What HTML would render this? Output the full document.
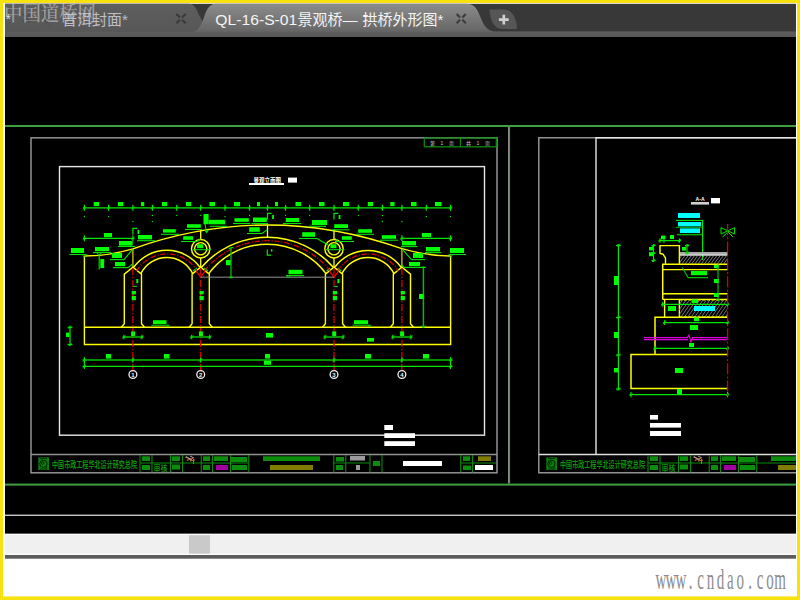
<!DOCTYPE html>
<html lang="zh-CN"><head><meta charset="utf-8"><title>QL-16-S-01景观桥— 拱桥外形图</title>
<style>
html,body{margin:0;padding:0;background:#f7e20f;width:800px;height:600px;overflow:hidden}
svg{display:block;position:absolute;left:0;top:0}
text{font-family:"Liberation Sans","Noto Sans CJK SC",sans-serif}
.wm{font-family:"Liberation Serif","Noto Serif CJK SC",serif}
</style></head><body>
<svg width="800" height="600" viewBox="0 0 800 600">
<defs>
<linearGradient id="tabA" x1="0" y1="0" x2="0" y2="1"><stop offset="0" stop-color="#8c8c8c"/><stop offset="0.75" stop-color="#6a6a6a"/><stop offset="1" stop-color="#565656"/></linearGradient>
<linearGradient id="tabI" x1="0" y1="0" x2="0" y2="1"><stop offset="0" stop-color="#5e5e5e"/><stop offset="1" stop-color="#575757"/></linearGradient>
</defs>
<rect x="0" y="0" width="800" height="600" fill="#f7e20f"/>
<rect x="3" y="3" width="794" height="593.4" fill="#ffffff"/>
<!-- tab bar -->
<rect x="5" y="3.8" width="791" height="33.2" fill="#383838"/>
<path d="M5 3.8 H189 C195 3.8 197 11 200 17 C202 20 203.2 22 202.6 24 C201 29 197 32 191 32 H5 Z" fill="url(#tabI)"/>
<path d="M37 4 C44 5 43 22 49 26" fill="none" stroke="#4c4c4c" stroke-width="1"/>
<path d="M5 37 V32 H191 C198 32 200.5 26 203 20 C206 12 208 3.8 216 3.8 H466 C475 3.8 477.5 10 480 16 C483 23.5 486 31.5 496 31.5 H796 V37 Z" fill="url(#tabA)"/>
<rect x="5" y="32" width="791" height="5" fill="#5a5a5a" opacity="0.55"/>
<path d="M489.5 9.5 H504 C512 9.5 516.5 18 517 29 H502 C494 29 490 20 489.5 9.5 Z" fill="#565656"/>
<path d="M503.8 14.8 V24.6 M498.9 19.7 H508.7" stroke="#cecece" stroke-width="2.7" fill="none"/>
<path d="M182.1 19.7 L185.6 23.2 M182.1 17.5 L185.6 14.0 M179.9 19.7 L176.4 23.2 M179.9 17.5 L176.4 14.0" stroke="#3a3a3a" stroke-width="2.1" fill="none" />
<path d="M462.3 19.8 L465.8 23.3 M462.3 17.6 L465.8 14.1 M460.1 19.8 L456.6 23.3 M460.1 17.6 L456.6 14.1" stroke="#3c3c3c" stroke-width="2.1" fill="none" />
<path d="M23 14 L30 22 M30 14 L23 22" stroke="#444" stroke-width="1.8" fill="none" opacity="0.7"/>
<text x="5.5" y="24" font-size="14" fill="#d8d8d8">*</text>
<text x="62" y="25.4" font-size="15" fill="#bebec8">普洱封面*</text>
<text y="24.8" font-size="15" fill="#f4f4f4"><tspan x="215.3" font-size="14.7" textLength="82" lengthAdjust="spacingAndGlyphs">QL-16-S-01</tspan><tspan x="297.6">景观桥—</tspan><tspan> </tspan><tspan x="362.6">拱桥外形图*</tspan></text>
<text class="wm" x="4" y="21" font-size="20" font-weight="500" fill="#cccccc" opacity="0.62" textLength="92" lengthAdjust="spacingAndGlyphs">中国道桥网</text>
<!-- canvas -->
<rect x="5" y="37" width="791" height="496.8" fill="#000000"/>
<rect x="5" y="125" width="791" height="2" fill="#3f9f3f"/>
<rect x="5" y="483.6" width="791" height="2" fill="#3f9f3f"/>
<rect x="508" y="127" width="1" height="356.6" fill="#8a8a8a"/>
<rect x="509" y="127" width="1.1" height="356.6" fill="#3f9f3f"/>
<rect x="5" y="514.6" width="791" height="1.3" fill="#d8d8d8"/>
<g id="sheet1">
<rect x="31" y="137.8" width="466" height="335" fill="none" stroke="#929292" stroke-width="1.5"/>
<line x1="31.00" y1="454.60" x2="497.00" y2="454.60" stroke="#929292" stroke-width="1.5" />
<rect x="59.5" y="166.6" width="425" height="268.6" fill="none" stroke="#e6e6e6" stroke-width="1.4"/>
<rect x="424.3" y="138" width="72" height="8.8" fill="none" stroke="#0a8a0a" stroke-width="1.3"/>
<line x1="460.40" y1="138.00" x2="460.40" y2="146.80" stroke="#0a8a0a" stroke-width="1.2" />
<text x="430" y="144.6" font-size="5" fill="#cfcfcf" textLength="24" lengthAdjust="spacing">第 1 页</text>
<text x="466" y="144.6" font-size="5" fill="#cfcfcf" textLength="24" lengthAdjust="spacing">共 1 页</text>
<text x="253.5" y="182.6" font-size="6.6" font-weight="700" fill="#ffffff" textLength="27.5" lengthAdjust="spacingAndGlyphs">景观立面图</text>
<rect x="249.00" y="183.00" width="35.00" height="2.00" fill="#ffffff" />
<rect x="288.00" y="177.60" width="9.00" height="5.00" fill="#ffffff" />
<rect x="384.30" y="425.00" width="8.70" height="5.00" fill="#ffffff" />
<rect x="384.30" y="433.20" width="30.70" height="4.80" fill="#ffffff" />
<rect x="384.30" y="441.20" width="30.70" height="4.80" fill="#ffffff" />
<rect x="38.30" y="457.40" width="10.70" height="12.60" fill="#0a800a" />
<circle cx="43.40" cy="463.80" r="3.60" stroke="#001800" stroke-width="0.9" fill="none"/>
<circle cx="42.60" cy="463.00" r="1.30" stroke="#001800" stroke-width="0.9" fill="none"/>
<path d="M40 458.6 h7 M40 469 h7 M45 466 l2 2.4" stroke="#001800" stroke-width="0.8" fill="none" />
<text x="52.0" y="467.8" font-size="8.8" font-weight="700" fill="#0d900d" textLength="85" lengthAdjust="spacingAndGlyphs" transform="translate(0,0)">中国市政工程华北设计研究总院</text>
<line x1="140.00" y1="455.00" x2="140.00" y2="472.50" stroke="#0a8a0a" stroke-width="1.1" />
<line x1="152.00" y1="455.00" x2="152.00" y2="472.50" stroke="#0a8a0a" stroke-width="1.1" />
<line x1="170.50" y1="455.00" x2="170.50" y2="472.50" stroke="#0a8a0a" stroke-width="1.1" />
<line x1="182.50" y1="455.00" x2="182.50" y2="472.50" stroke="#0a8a0a" stroke-width="1.1" />
<line x1="201.25" y1="455.00" x2="201.25" y2="472.50" stroke="#0a8a0a" stroke-width="1.1" />
<line x1="212.50" y1="455.00" x2="212.50" y2="472.50" stroke="#0a8a0a" stroke-width="1.1" />
<line x1="230.50" y1="455.00" x2="230.50" y2="472.50" stroke="#0a8a0a" stroke-width="1.1" />
<line x1="248.75" y1="455.00" x2="248.75" y2="472.50" stroke="#0a8a0a" stroke-width="1.1" />
<line x1="333.75" y1="455.00" x2="333.75" y2="472.50" stroke="#0a8a0a" stroke-width="1.1" />
<line x1="345.75" y1="455.00" x2="345.75" y2="472.50" stroke="#0a8a0a" stroke-width="1.1" />
<line x1="370.00" y1="455.00" x2="370.00" y2="472.50" stroke="#0a8a0a" stroke-width="1.1" />
<line x1="382.00" y1="455.00" x2="382.00" y2="472.50" stroke="#0a8a0a" stroke-width="1.1" />
<line x1="460.75" y1="455.00" x2="460.75" y2="472.50" stroke="#0a8a0a" stroke-width="1.1" />
<line x1="472.50" y1="455.00" x2="472.50" y2="472.50" stroke="#0a8a0a" stroke-width="1.1" />
<line x1="140.00" y1="463.00" x2="248.75" y2="463.00" stroke="#0a8a0a" stroke-width="1.1" />
<line x1="333.75" y1="463.00" x2="370.00" y2="463.00" stroke="#0a8a0a" stroke-width="1.1" />
<line x1="460.75" y1="463.00" x2="496.00" y2="463.00" stroke="#0a8a0a" stroke-width="1.1" />
<rect x="142.00" y="456.30" width="8.00" height="4.70" fill="#0c8c0c" />
<rect x="142.00" y="465.00" width="8.00" height="5.00" fill="#0c8c0c" />
<rect x="172.00" y="456.30" width="8.00" height="4.70" fill="#0c8c0c" />
<rect x="172.00" y="464.50" width="8.00" height="5.00" fill="#0c8c0c" />
<rect x="203.00" y="456.30" width="7.00" height="4.70" fill="#0c8c0c" />
<rect x="203.00" y="465.00" width="7.00" height="5.00" fill="#0c8c0c" />
<rect x="214.00" y="456.30" width="14.00" height="4.70" fill="#0c8c0c" />
<rect x="216.00" y="465.00" width="12.00" height="5.00" fill="#a000a0" />
<rect x="231.00" y="457.00" width="16.00" height="5.00" fill="#0c8c0c" />
<rect x="232.00" y="465.00" width="15.00" height="5.00" fill="#0c8c0c" />
<rect x="263.00" y="456.30" width="57.00" height="4.70" fill="#0c8c0c" />
<rect x="270.00" y="465.00" width="43.00" height="5.00" fill="#807c00" />
<rect x="336.00" y="457.00" width="8.00" height="4.50" fill="#0c8c0c" />
<rect x="336.00" y="465.00" width="7.00" height="5.00" fill="#0c8c0c" />
<rect x="350.00" y="456.00" width="15.00" height="4.50" fill="#9a9a9a" />
<rect x="356.00" y="465.00" width="4.00" height="5.00" fill="#9a9a9a" />
<rect x="373.00" y="461.00" width="7.00" height="5.00" fill="#0c8c0c" />
<rect x="403.00" y="461.00" width="39.00" height="5.00" fill="#ffffff" />
<rect x="463.00" y="456.30" width="7.00" height="4.70" fill="#0c8c0c" />
<rect x="463.00" y="465.50" width="8.00" height="4.50" fill="#0c8c0c" />
<rect x="478.00" y="456.30" width="13.00" height="4.70" fill="#807c00" />
<rect x="475.00" y="465.00" width="18.00" height="5.00" fill="#ffffff" />
<text x="153.5" y="471" font-size="7.6" font-weight="700" fill="#0d900d" textLength="14" lengthAdjust="spacingAndGlyphs">审核</text>
<path d="M185 457 l4 1.5 l-2 2 l6 -2.5 l-3 3 l5 -1 M193.5 459 l0 5" stroke="#c06a30" stroke-width="1" fill="none" />
<path d="M186 456.5 l5 3 M190 456 l4 2" stroke="#cfcfcf" stroke-width="0.8" fill="none" />
<path d="M84.4 256 Q108.6 256 132.9 248.8 Q200.2 225 267.5 225 Q334.7 225 401.9 248.7 Q426.2 256 450.6 256" stroke="#ffff00" stroke-width="1.4" fill="none" />
<path d="M84.4 256 V344.5 H450.6 V256" stroke="#ffff00" stroke-width="1.4" fill="none" />
<line x1="84.40" y1="327.30" x2="450.60" y2="327.30" stroke="#ffff00" stroke-width="1.4" />
<line x1="132.90" y1="248.80" x2="132.90" y2="267.20" stroke="#d8c800" stroke-width="1.3" />
<line x1="401.90" y1="248.60" x2="401.90" y2="267.20" stroke="#d8c800" stroke-width="1.3" />
<line x1="267.50" y1="225.00" x2="267.50" y2="237.00" stroke="#ffff00" stroke-width="1.3" />
<line x1="200.70" y1="230.20" x2="200.70" y2="239.40" stroke="#ffff00" stroke-width="1.3" />
<line x1="200.70" y1="258.00" x2="200.70" y2="267.00" stroke="#ffff00" stroke-width="1.3" />
<circle cx="200.70" cy="248.75" r="9.20" stroke="#ffff00" stroke-width="1.4" fill="none"/>
<circle cx="200.70" cy="248.75" r="6.10" stroke="#ffff00" stroke-width="1.4" fill="none"/>
<rect x="197.10" y="244.20" width="6.00" height="4.00" fill="#00ff00" />
<line x1="192.70" y1="249.70" x2="211.20" y2="249.70" stroke="#00e600" stroke-width="1" />
<line x1="334.00" y1="230.20" x2="334.00" y2="239.40" stroke="#ffff00" stroke-width="1.3" />
<line x1="334.00" y1="258.00" x2="334.00" y2="267.00" stroke="#ffff00" stroke-width="1.3" />
<circle cx="334.00" cy="248.75" r="9.20" stroke="#ffff00" stroke-width="1.4" fill="none"/>
<circle cx="334.00" cy="248.75" r="6.10" stroke="#ffff00" stroke-width="1.4" fill="none"/>
<rect x="330.40" y="244.20" width="6.00" height="4.00" fill="#00ff00" />
<line x1="326.00" y1="249.70" x2="344.50" y2="249.70" stroke="#00e600" stroke-width="1" />
<path d="M121.30 327.3 L124.30 323.7 V274.2 L132.90 267.2 L141.50 274.2 V323.7 L144.50 327.3" stroke="#ffff00" stroke-width="1.4" fill="none" />
<path d="M189.10 327.3 L192.10 323.7 V274.2 L200.70 267.2 L209.30 274.2 V323.7 L212.30 327.3" stroke="#ffff00" stroke-width="1.4" fill="none" />
<path d="M322.40 327.3 L325.40 323.7 V274.2 L334.00 267.2 L342.60 274.2 V323.7 L345.60 327.3" stroke="#ffff00" stroke-width="1.4" fill="none" />
<path d="M390.30 327.3 L393.30 323.7 V274.2 L401.90 267.2 L410.50 274.2 V323.7 L413.50 327.3" stroke="#ffff00" stroke-width="1.4" fill="none" />
<path d="M196.29999999999998 271.4 L200.7 277 L205.1 271.4" stroke="#d80000" stroke-width="1.4" fill="none" />
<path d="M193.29999999999998 271 l3.6 -3 M204.29999999999998 268 l3.6 3" stroke="#00e600" stroke-width="1.3" fill="none" />
<path d="M329.6 271.4 L334.0 277 L338.4 271.4" stroke="#d80000" stroke-width="1.4" fill="none" />
<path d="M326.6 271 l3.6 -3 M337.6 268 l3.6 3" stroke="#00e600" stroke-width="1.3" fill="none" />
<path d="M133.70 267.20 A40.86 40.86 0 0 1 199.90 267.20" stroke="#ffff00" stroke-width="1.5" fill="none" />
<path d="M140.90 273.60 A28.88 28.88 0 0 1 192.70 273.60" stroke="#ffff00" stroke-width="1.5" fill="none" />
<path d="M136.50 271.00 A35.39 35.39 0 0 1 197.10 271.00" stroke="#d80000" stroke-width="1.25" fill="none" stroke-dasharray="5.5 1.6 1.2 1.6"/>
<path d="M334.80 267.20 A41.25 41.25 0 0 1 401.10 267.20" stroke="#ffff00" stroke-width="1.5" fill="none" />
<path d="M342.00 273.60 A28.96 28.96 0 0 1 393.90 273.60" stroke="#ffff00" stroke-width="1.5" fill="none" />
<path d="M337.60 271.00 A35.59 35.59 0 0 1 398.30 271.00" stroke="#d80000" stroke-width="1.25" fill="none" stroke-dasharray="5.5 1.6 1.2 1.6"/>
<path d="M201.50 267.20 A87.27 87.27 0 0 1 333.20 267.20" stroke="#ffff00" stroke-width="1.5" fill="none" />
<path d="M208.70 273.60 A73.20 73.20 0 0 1 326.00 273.60" stroke="#ffff00" stroke-width="1.5" fill="none" />
<path d="M204.30 271.00 A80.75 80.75 0 0 1 330.40 271.00" stroke="#d80000" stroke-width="1.25" fill="none" stroke-dasharray="5.5 1.6 1.2 1.6"/>
<line x1="132.90" y1="268.00" x2="132.90" y2="370.50" stroke="#d80000" stroke-width="1.3" stroke-dasharray="7 1.8 1.4 1.8"/>
<line x1="200.70" y1="268.00" x2="200.70" y2="370.50" stroke="#d80000" stroke-width="1.3" stroke-dasharray="7 1.8 1.4 1.8"/>
<line x1="334.00" y1="268.00" x2="334.00" y2="370.50" stroke="#d80000" stroke-width="1.3" stroke-dasharray="7 1.8 1.4 1.8"/>
<line x1="401.90" y1="268.00" x2="401.90" y2="370.50" stroke="#d80000" stroke-width="1.3" stroke-dasharray="7 1.8 1.4 1.8"/>
<line x1="200.70" y1="277.20" x2="334.00" y2="277.20" stroke="#909090" stroke-width="1" />
<rect x="288.50" y="269.80" width="14.00" height="4.40" fill="#00ff00" />
<line x1="286.00" y1="275.60" x2="304.00" y2="275.60" stroke="#00e600" stroke-width="1.1" />
<path d="M286.5 275.6 l2 2.4 l2 -2.4" stroke="#00e600" stroke-width="0.9" fill="none" />
<line x1="82.90" y1="207.80" x2="452.10" y2="207.80" stroke="#00e600" stroke-width="1.3" />
<line x1="84.40" y1="204.80" x2="84.40" y2="210.80" stroke="#00e600" stroke-width="1.2" />
<line x1="82.90" y1="209.30" x2="85.90" y2="206.30" stroke="#00e600" stroke-width="0.8" />
<line x1="108.60" y1="204.80" x2="108.60" y2="210.80" stroke="#00e600" stroke-width="1.2" />
<line x1="107.10" y1="209.30" x2="110.10" y2="206.30" stroke="#00e600" stroke-width="0.8" />
<line x1="132.90" y1="204.80" x2="132.90" y2="210.80" stroke="#00e600" stroke-width="1.2" />
<line x1="131.40" y1="209.30" x2="134.40" y2="206.30" stroke="#00e600" stroke-width="0.8" />
<line x1="152.40" y1="204.80" x2="152.40" y2="210.80" stroke="#00e600" stroke-width="1.2" />
<line x1="150.90" y1="209.30" x2="153.90" y2="206.30" stroke="#00e600" stroke-width="0.8" />
<line x1="176.70" y1="204.80" x2="176.70" y2="210.80" stroke="#00e600" stroke-width="1.2" />
<line x1="175.20" y1="209.30" x2="178.20" y2="206.30" stroke="#00e600" stroke-width="0.8" />
<line x1="200.70" y1="204.80" x2="200.70" y2="210.80" stroke="#00e600" stroke-width="1.2" />
<line x1="199.20" y1="209.30" x2="202.20" y2="206.30" stroke="#00e600" stroke-width="0.8" />
<line x1="225.00" y1="204.80" x2="225.00" y2="210.80" stroke="#00e600" stroke-width="1.2" />
<line x1="223.50" y1="209.30" x2="226.50" y2="206.30" stroke="#00e600" stroke-width="0.8" />
<line x1="249.50" y1="204.80" x2="249.50" y2="210.80" stroke="#00e600" stroke-width="1.2" />
<line x1="248.00" y1="209.30" x2="251.00" y2="206.30" stroke="#00e600" stroke-width="0.8" />
<line x1="267.50" y1="204.80" x2="267.50" y2="210.80" stroke="#00e600" stroke-width="1.2" />
<line x1="266.00" y1="209.30" x2="269.00" y2="206.30" stroke="#00e600" stroke-width="0.8" />
<line x1="285.50" y1="204.80" x2="285.50" y2="210.80" stroke="#00e600" stroke-width="1.2" />
<line x1="284.00" y1="209.30" x2="287.00" y2="206.30" stroke="#00e600" stroke-width="0.8" />
<line x1="309.60" y1="204.80" x2="309.60" y2="210.80" stroke="#00e600" stroke-width="1.2" />
<line x1="308.10" y1="209.30" x2="311.10" y2="206.30" stroke="#00e600" stroke-width="0.8" />
<line x1="334.00" y1="204.80" x2="334.00" y2="210.80" stroke="#00e600" stroke-width="1.2" />
<line x1="332.50" y1="209.30" x2="335.50" y2="206.30" stroke="#00e600" stroke-width="0.8" />
<line x1="358.30" y1="204.80" x2="358.30" y2="210.80" stroke="#00e600" stroke-width="1.2" />
<line x1="356.80" y1="209.30" x2="359.80" y2="206.30" stroke="#00e600" stroke-width="0.8" />
<line x1="382.40" y1="204.80" x2="382.40" y2="210.80" stroke="#00e600" stroke-width="1.2" />
<line x1="380.90" y1="209.30" x2="383.90" y2="206.30" stroke="#00e600" stroke-width="0.8" />
<line x1="401.90" y1="204.80" x2="401.90" y2="210.80" stroke="#00e600" stroke-width="1.2" />
<line x1="400.40" y1="209.30" x2="403.40" y2="206.30" stroke="#00e600" stroke-width="0.8" />
<line x1="426.30" y1="204.80" x2="426.30" y2="210.80" stroke="#00e600" stroke-width="1.2" />
<line x1="424.80" y1="209.30" x2="427.80" y2="206.30" stroke="#00e600" stroke-width="0.8" />
<line x1="450.60" y1="204.80" x2="450.60" y2="210.80" stroke="#00e600" stroke-width="1.2" />
<line x1="449.10" y1="209.30" x2="452.10" y2="206.30" stroke="#00e600" stroke-width="0.8" />
<rect x="93.70" y="202.00" width="5.30" height="4.20" fill="#00ff00" />
<rect x="118.00" y="202.00" width="5.30" height="4.20" fill="#00ff00" />
<rect x="140.90" y="202.00" width="3.30" height="4.20" fill="#00ff00" />
<rect x="162.00" y="202.00" width="5.20" height="4.20" fill="#00ff00" />
<rect x="186.00" y="202.00" width="5.20" height="4.20" fill="#00ff00" />
<rect x="209.50" y="202.00" width="5.50" height="4.20" fill="#00ff00" />
<rect x="234.00" y="202.00" width="6.00" height="4.20" fill="#00ff00" />
<rect x="257.00" y="202.00" width="3.00" height="4.20" fill="#00ff00" />
<rect x="275.00" y="202.00" width="3.00" height="4.20" fill="#00ff00" />
<rect x="295.50" y="202.00" width="5.50" height="4.20" fill="#00ff00" />
<rect x="319.00" y="202.00" width="5.50" height="4.20" fill="#00ff00" />
<rect x="343.00" y="202.00" width="6.00" height="4.20" fill="#00ff00" />
<rect x="367.80" y="202.00" width="5.20" height="4.20" fill="#00ff00" />
<rect x="390.30" y="202.00" width="4.20" height="4.20" fill="#00ff00" />
<rect x="411.00" y="202.00" width="5.50" height="4.20" fill="#00ff00" />
<rect x="435.00" y="202.00" width="6.50" height="4.20" fill="#00ff00" />
<rect x="83.80" y="215.90" width="1.20" height="1.20" fill="#00e600" />
<rect x="108.00" y="215.90" width="1.20" height="1.20" fill="#00e600" />
<rect x="132.30" y="220.90" width="1.20" height="1.20" fill="#00e600" />
<rect x="151.80" y="214.80" width="1.20" height="1.20" fill="#00e600" />
<rect x="151.80" y="220.90" width="1.20" height="1.20" fill="#00e600" />
<rect x="176.10" y="214.80" width="1.20" height="1.20" fill="#00e600" />
<rect x="200.10" y="214.80" width="1.20" height="1.20" fill="#00e600" />
<rect x="224.40" y="215.90" width="1.20" height="1.20" fill="#00e600" />
<rect x="248.90" y="214.80" width="1.20" height="1.20" fill="#00e600" />
<rect x="284.90" y="214.80" width="1.20" height="1.20" fill="#00e600" />
<rect x="309.00" y="214.80" width="1.20" height="1.20" fill="#00e600" />
<rect x="357.70" y="214.90" width="1.20" height="1.20" fill="#00e600" />
<rect x="381.80" y="214.90" width="1.20" height="1.20" fill="#00e600" />
<rect x="381.80" y="220.90" width="1.20" height="1.20" fill="#00e600" />
<rect x="401.30" y="220.90" width="1.20" height="1.20" fill="#00e600" />
<rect x="425.70" y="215.90" width="1.20" height="1.20" fill="#00e600" />
<rect x="450.00" y="215.90" width="1.20" height="1.20" fill="#00e600" />
<line x1="82.90" y1="238.30" x2="134.40" y2="238.30" stroke="#00e600" stroke-width="1.3" />
<line x1="84.40" y1="235.30" x2="84.40" y2="241.30" stroke="#00e600" stroke-width="1.2" />
<line x1="82.90" y1="239.80" x2="85.90" y2="236.80" stroke="#00e600" stroke-width="0.8" />
<line x1="132.90" y1="235.30" x2="132.90" y2="241.30" stroke="#00e600" stroke-width="1.2" />
<line x1="131.40" y1="239.80" x2="134.40" y2="236.80" stroke="#00e600" stroke-width="0.8" />
<rect x="104.00" y="233.00" width="8.00" height="4.20" fill="#00ff00" />
<line x1="400.40" y1="238.30" x2="452.10" y2="238.30" stroke="#00e600" stroke-width="1.3" />
<line x1="401.90" y1="235.30" x2="401.90" y2="241.30" stroke="#00e600" stroke-width="1.2" />
<line x1="400.40" y1="239.80" x2="403.40" y2="236.80" stroke="#00e600" stroke-width="0.8" />
<line x1="450.60" y1="235.30" x2="450.60" y2="241.30" stroke="#00e600" stroke-width="1.2" />
<line x1="449.10" y1="239.80" x2="452.10" y2="236.80" stroke="#00e600" stroke-width="0.8" />
<rect x="422.00" y="233.00" width="9.00" height="4.20" fill="#00ff00" />
<path d="M132.9 234.4 V228.4 H137.1" stroke="#00e600" stroke-width="1.2" fill="none" />
<rect x="137.50" y="230.00" width="1.80" height="4.00" fill="#00ff00" />
<path d="M267.5 219.4 V213.4 H271.7" stroke="#00e600" stroke-width="1.2" fill="none" />
<rect x="272.10" y="215.00" width="1.80" height="4.00" fill="#00ff00" />
<path d="M334 219.4 V213.4 H338.2" stroke="#00e600" stroke-width="1.2" fill="none" />
<rect x="338.60" y="215.00" width="1.80" height="4.00" fill="#00ff00" />
<path d="M267.3 249.6 V255.2 H271" stroke="#00e600" stroke-width="1.2" fill="none" />
<rect x="271.00" y="249.20" width="1.40" height="2.40" fill="#00ff00" />
<rect x="71.00" y="248.00" width="13.00" height="5.00" fill="#00ff00" />
<line x1="69.50" y1="254.50" x2="86.50" y2="254.50" stroke="#00e600" stroke-width="1.1" />
<rect x="95.00" y="247.00" width="14.00" height="4.20" fill="#00ff00" />
<line x1="93.00" y1="252.60" x2="111.00" y2="252.60" stroke="#00e600" stroke-width="1.1" />
<rect x="119.00" y="241.00" width="13.60" height="4.60" fill="#00ff00" />
<line x1="118.00" y1="246.50" x2="135.00" y2="246.50" stroke="#00e600" stroke-width="1.1" />
<rect x="138.00" y="235.00" width="14.00" height="4.40" fill="#00ff00" />
<line x1="137.00" y1="240.70" x2="155.00" y2="240.70" stroke="#00e600" stroke-width="1.1" />
<rect x="163.00" y="229.20" width="12.80" height="3.40" fill="#00ff00" />
<line x1="161.00" y1="234.30" x2="179.00" y2="234.30" stroke="#00e600" stroke-width="1.1" />
<rect x="187.00" y="224.20" width="13.80" height="3.60" fill="#00ff00" />
<line x1="185.00" y1="229.50" x2="202.00" y2="229.50" stroke="#00e600" stroke-width="1.1" />
<rect x="203.50" y="214.00" width="5.10" height="10.20" fill="#00ff00" />
<rect x="208.60" y="219.80" width="16.40" height="4.50" fill="#00ff00" />
<line x1="210.00" y1="226.30" x2="227.00" y2="226.30" stroke="#00e600" stroke-width="1.1" />
<path d="M205 224 L206.6 232.4 M205 230.4 l1.8 2.2 l1.4 -2.6" stroke="#00e600" stroke-width="1.1" fill="none" />
<rect x="183.20" y="236.20" width="9.80" height="3.60" fill="#00ff00" />
<line x1="181.00" y1="241.50" x2="197.00" y2="241.50" stroke="#00e600" stroke-width="1.1" />
<path d="M197 241.5 L200.4 238.6" stroke="#00e600" stroke-width="1.1" fill="none" />
<rect x="112.00" y="253.00" width="10.00" height="5.00" fill="#00ff00" />
<line x1="110.00" y1="259.60" x2="124.00" y2="259.60" stroke="#00e600" stroke-width="1.1" />
<path d="M124 259.6 L132.5 249.4" stroke="#00e600" stroke-width="1.1" fill="none" />
<rect x="115.00" y="262.00" width="10.00" height="4.20" fill="#00ff00" />
<line x1="113.00" y1="267.60" x2="128.00" y2="267.60" stroke="#00e600" stroke-width="1.1" />
<path d="M128 267.6 L132.5 264" stroke="#00e600" stroke-width="1.1" fill="none" />
<rect x="100.30" y="259.00" width="3.90" height="9.00" fill="#00ff00" />
<line x1="99.20" y1="254.00" x2="99.20" y2="269.50" stroke="#00e600" stroke-width="1.1" />
<path d="M97 252.8 l2.2 3 l2.2 -3" stroke="#00e600" stroke-width="0.9" fill="none" />
<path d="M82.4 254.6 l2 2.6 l2 -2.6" stroke="#00e600" stroke-width="0.9" fill="none" />
<rect x="234.50" y="218.20" width="14.30" height="3.60" fill="#00ff00" />
<line x1="233.00" y1="223.50" x2="250.00" y2="223.50" stroke="#00e600" stroke-width="1.1" />
<rect x="253.00" y="217.50" width="13.80" height="4.50" fill="#00ff00" />
<line x1="251.50" y1="223.50" x2="268.00" y2="223.50" stroke="#00e600" stroke-width="1.1" />
<rect x="249.20" y="227.20" width="10.60" height="4.60" fill="#00ff00" />
<line x1="247.00" y1="233.50" x2="262.00" y2="233.50" stroke="#00e600" stroke-width="1.1" />
<path d="M262 233.5 L267.3 229.6" stroke="#00e600" stroke-width="1.1" fill="none" />
<rect x="285.80" y="218.00" width="13.20" height="4.00" fill="#00ff00" />
<line x1="283.00" y1="223.50" x2="301.00" y2="223.50" stroke="#00e600" stroke-width="1.1" />
<rect x="312.00" y="220.00" width="15.00" height="5.00" fill="#00ff00" />
<line x1="309.00" y1="226.30" x2="326.00" y2="226.30" stroke="#00e600" stroke-width="1.1" />
<rect x="302.20" y="232.20" width="12.80" height="4.60" fill="#00ff00" />
<line x1="299.00" y1="238.50" x2="317.00" y2="238.50" stroke="#00e600" stroke-width="1.1" />
<path d="M317 238.5 L328 245" stroke="#00e600" stroke-width="1.1" fill="none" />
<rect x="334.20" y="224.20" width="13.80" height="3.80" fill="#00ff00" />
<line x1="332.00" y1="229.80" x2="349.50" y2="229.80" stroke="#00e600" stroke-width="1.1" />
<rect x="342.00" y="236.20" width="9.80" height="3.60" fill="#00ff00" />
<line x1="335.00" y1="241.50" x2="354.00" y2="241.50" stroke="#00e600" stroke-width="1.1" />
<path d="M335 238 L338 241.5" stroke="#00e600" stroke-width="1" fill="none" />
<rect x="358.20" y="229.20" width="13.80" height="3.60" fill="#00ff00" />
<line x1="356.00" y1="234.30" x2="374.00" y2="234.30" stroke="#00e600" stroke-width="1.1" />
<rect x="381.80" y="235.20" width="14.20" height="3.60" fill="#00ff00" />
<line x1="380.00" y1="240.20" x2="398.00" y2="240.20" stroke="#00e600" stroke-width="1.1" />
<rect x="402.00" y="241.00" width="14.00" height="4.40" fill="#00ff00" />
<line x1="401.00" y1="246.60" x2="417.50" y2="246.60" stroke="#00e600" stroke-width="1.1" />
<rect x="426.00" y="247.00" width="14.00" height="4.40" fill="#00ff00" />
<line x1="425.00" y1="252.60" x2="441.50" y2="252.60" stroke="#00e600" stroke-width="1.1" />
<rect x="450.00" y="248.00" width="14.00" height="5.00" fill="#00ff00" />
<line x1="449.00" y1="254.50" x2="466.00" y2="254.50" stroke="#00e600" stroke-width="1.1" />
<rect x="413.00" y="253.00" width="10.00" height="5.00" fill="#00ff00" />
<line x1="411.50" y1="259.60" x2="425.00" y2="259.60" stroke="#00e600" stroke-width="1.1" />
<path d="M411.5 259.6 L402.4 249.4" stroke="#00e600" stroke-width="1.1" fill="none" />
<rect x="409.00" y="262.00" width="11.00" height="4.20" fill="#00ff00" />
<line x1="404.00" y1="267.40" x2="424.50" y2="267.40" stroke="#00e600" stroke-width="1.1" />
<path d="M404 267.4 L402 265" stroke="#00e600" stroke-width="1.1" fill="none" />
<path d="M448.6 254.6 l2 2.6 l2 -2.6" stroke="#00e600" stroke-width="0.9" fill="none" />
<line x1="423.40" y1="266.40" x2="423.40" y2="328.00" stroke="#00c000" stroke-width="1.5" />
<line x1="421.00" y1="267.40" x2="426.00" y2="267.40" stroke="#00e600" stroke-width="1.1" />
<path d="M421 325.4 l2.4 2.4 l2.4 -2.4" stroke="#00e600" stroke-width="1" fill="none" />
<rect x="419.00" y="294.00" width="4.60" height="5.00" fill="#00ff00" />
<line x1="231.00" y1="247.50" x2="231.00" y2="278.50" stroke="#00c000" stroke-width="1.3" />
<line x1="229.00" y1="277.20" x2="233.00" y2="277.20" stroke="#00e600" stroke-width="1" />
<line x1="228.60" y1="248.60" x2="233.40" y2="247.20" stroke="#00e600" stroke-width="1" />
<rect x="226.00" y="260.00" width="4.60" height="5.20" fill="#00ff00" />
<rect x="131.70" y="291.00" width="4.20" height="3.40" fill="#00ff00" />
<rect x="131.70" y="296.00" width="4.20" height="4.20" fill="#00ff00" />
<rect x="199.50" y="291.00" width="4.20" height="3.40" fill="#00ff00" />
<rect x="199.50" y="296.00" width="4.20" height="4.20" fill="#00ff00" />
<rect x="332.80" y="291.00" width="4.20" height="3.40" fill="#00ff00" />
<rect x="332.80" y="296.00" width="4.20" height="4.20" fill="#00ff00" />
<rect x="400.70" y="291.00" width="4.20" height="3.40" fill="#00ff00" />
<rect x="400.70" y="296.00" width="4.20" height="4.20" fill="#00ff00" />
<rect x="136.30" y="279.00" width="2.00" height="4.20" fill="#00ff00" />
<line x1="132.90" y1="286.40" x2="136.90" y2="286.40" stroke="#00e600" stroke-width="1" />
<rect x="337.40" y="279.00" width="2.00" height="4.20" fill="#00ff00" />
<line x1="334.00" y1="286.40" x2="338.00" y2="286.40" stroke="#00e600" stroke-width="1" />
<rect x="153.00" y="320.20" width="13.50" height="3.80" fill="#00ff00" />
<line x1="151.50" y1="325.20" x2="169.00" y2="325.20" stroke="#00e600" stroke-width="1" />
<path d="M166.5 325.2 l1.4 1.8 l1.4 -1.8" stroke="#00e600" stroke-width="0.8" fill="none" />
<rect x="354.00" y="320.20" width="14.00" height="3.80" fill="#00ff00" />
<line x1="352.50" y1="325.20" x2="370.50" y2="325.20" stroke="#00e600" stroke-width="1" />
<path d="M368 325.2 l1.4 1.8 l1.4 -1.8" stroke="#00e600" stroke-width="0.8" fill="none" />
<line x1="122.40" y1="337.00" x2="143.40" y2="337.00" stroke="#00e600" stroke-width="1.3" />
<line x1="123.90" y1="334.80" x2="123.90" y2="339.20" stroke="#00e600" stroke-width="1.2" />
<line x1="122.40" y1="338.50" x2="125.40" y2="335.50" stroke="#00e600" stroke-width="0.8" />
<line x1="141.90" y1="334.80" x2="141.90" y2="339.20" stroke="#00e600" stroke-width="1.2" />
<line x1="140.40" y1="338.50" x2="143.40" y2="335.50" stroke="#00e600" stroke-width="0.8" />
<rect x="131.10" y="331.40" width="4.00" height="4.60" fill="#00ff00" />
<line x1="190.20" y1="337.00" x2="211.20" y2="337.00" stroke="#00e600" stroke-width="1.3" />
<line x1="191.70" y1="334.80" x2="191.70" y2="339.20" stroke="#00e600" stroke-width="1.2" />
<line x1="190.20" y1="338.50" x2="193.20" y2="335.50" stroke="#00e600" stroke-width="0.8" />
<line x1="209.70" y1="334.80" x2="209.70" y2="339.20" stroke="#00e600" stroke-width="1.2" />
<line x1="208.20" y1="338.50" x2="211.20" y2="335.50" stroke="#00e600" stroke-width="0.8" />
<rect x="198.90" y="331.40" width="4.00" height="4.60" fill="#00ff00" />
<line x1="323.50" y1="337.00" x2="344.50" y2="337.00" stroke="#00e600" stroke-width="1.3" />
<line x1="325.00" y1="334.80" x2="325.00" y2="339.20" stroke="#00e600" stroke-width="1.2" />
<line x1="323.50" y1="338.50" x2="326.50" y2="335.50" stroke="#00e600" stroke-width="0.8" />
<line x1="343.00" y1="334.80" x2="343.00" y2="339.20" stroke="#00e600" stroke-width="1.2" />
<line x1="341.50" y1="338.50" x2="344.50" y2="335.50" stroke="#00e600" stroke-width="0.8" />
<rect x="332.20" y="331.40" width="4.00" height="4.60" fill="#00ff00" />
<line x1="391.40" y1="337.00" x2="412.40" y2="337.00" stroke="#00e600" stroke-width="1.3" />
<line x1="392.90" y1="334.80" x2="392.90" y2="339.20" stroke="#00e600" stroke-width="1.2" />
<line x1="391.40" y1="338.50" x2="394.40" y2="335.50" stroke="#00e600" stroke-width="0.8" />
<line x1="410.90" y1="334.80" x2="410.90" y2="339.20" stroke="#00e600" stroke-width="1.2" />
<line x1="409.40" y1="338.50" x2="412.40" y2="335.50" stroke="#00e600" stroke-width="0.8" />
<rect x="400.10" y="331.40" width="4.00" height="4.60" fill="#00ff00" />
<rect x="266.00" y="333.00" width="7.00" height="4.60" fill="#00ff00" />
<rect x="367.00" y="338.00" width="7.00" height="3.60" fill="#00ff00" />
<line x1="70.00" y1="325.80" x2="70.00" y2="346.00" stroke="#00e600" stroke-width="1.2" />
<line x1="67.60" y1="327.30" x2="72.40" y2="327.30" stroke="#00e600" stroke-width="1.2" />
<line x1="68.50" y1="328.80" x2="71.50" y2="325.80" stroke="#00e600" stroke-width="0.8" />
<line x1="67.60" y1="344.50" x2="72.40" y2="344.50" stroke="#00e600" stroke-width="1.2" />
<line x1="68.50" y1="346.00" x2="71.50" y2="343.00" stroke="#00e600" stroke-width="0.8" />
<rect x="66.00" y="332.60" width="3.40" height="4.40" fill="#00ff00" />
<line x1="82.50" y1="360.00" x2="452.50" y2="360.00" stroke="#00c000" stroke-width="1.7" />
<line x1="82.50" y1="366.30" x2="452.50" y2="366.30" stroke="#00e600" stroke-width="1.3" />
<line x1="84.40" y1="357.40" x2="84.40" y2="362.60" stroke="#00e600" stroke-width="1.2" />
<line x1="82.90" y1="361.50" x2="85.90" y2="358.50" stroke="#00e600" stroke-width="0.8" />
<line x1="132.90" y1="357.40" x2="132.90" y2="362.60" stroke="#00e600" stroke-width="1.2" />
<line x1="131.40" y1="361.50" x2="134.40" y2="358.50" stroke="#00e600" stroke-width="0.8" />
<line x1="200.70" y1="357.40" x2="200.70" y2="362.60" stroke="#00e600" stroke-width="1.2" />
<line x1="199.20" y1="361.50" x2="202.20" y2="358.50" stroke="#00e600" stroke-width="0.8" />
<line x1="334.00" y1="357.40" x2="334.00" y2="362.60" stroke="#00e600" stroke-width="1.2" />
<line x1="332.50" y1="361.50" x2="335.50" y2="358.50" stroke="#00e600" stroke-width="0.8" />
<line x1="401.90" y1="357.40" x2="401.90" y2="362.60" stroke="#00e600" stroke-width="1.2" />
<line x1="400.40" y1="361.50" x2="403.40" y2="358.50" stroke="#00e600" stroke-width="0.8" />
<line x1="450.60" y1="357.40" x2="450.60" y2="362.60" stroke="#00e600" stroke-width="1.2" />
<line x1="449.10" y1="361.50" x2="452.10" y2="358.50" stroke="#00e600" stroke-width="0.8" />
<line x1="84.40" y1="357.40" x2="84.40" y2="369.00" stroke="#00e600" stroke-width="1.2" />
<line x1="82.90" y1="367.80" x2="85.90" y2="364.80" stroke="#00e600" stroke-width="0.8" />
<line x1="450.60" y1="357.40" x2="450.60" y2="369.00" stroke="#00e600" stroke-width="1.2" />
<line x1="449.10" y1="367.80" x2="452.10" y2="364.80" stroke="#00e600" stroke-width="0.8" />
<rect x="106.00" y="354.00" width="5.00" height="4.60" fill="#00ff00" />
<rect x="164.00" y="354.00" width="5.40" height="4.60" fill="#00ff00" />
<rect x="265.00" y="354.00" width="5.00" height="4.60" fill="#00ff00" />
<rect x="365.00" y="354.00" width="6.00" height="4.60" fill="#00ff00" />
<rect x="423.00" y="354.00" width="6.00" height="4.60" fill="#00ff00" />
<rect x="264.00" y="360.60" width="7.00" height="4.20" fill="#00ff00" />
<circle cx="132.90" cy="374.50" r="3.90" stroke="#f2f2f2" stroke-width="1.3" fill="none"/>
<text x="132.9" y="376.7" font-size="6" font-weight="700" fill="#f2f2f2" text-anchor="middle">1</text>
<circle cx="200.70" cy="374.50" r="3.90" stroke="#f2f2f2" stroke-width="1.3" fill="none"/>
<text x="200.7" y="376.7" font-size="6" font-weight="700" fill="#f2f2f2" text-anchor="middle">2</text>
<circle cx="334.00" cy="374.50" r="3.90" stroke="#f2f2f2" stroke-width="1.3" fill="none"/>
<text x="334.0" y="376.7" font-size="6" font-weight="700" fill="#f2f2f2" text-anchor="middle">3</text>
<circle cx="401.90" cy="374.50" r="3.90" stroke="#f2f2f2" stroke-width="1.3" fill="none"/>
<text x="401.9" y="376.7" font-size="6" font-weight="700" fill="#f2f2f2" text-anchor="middle">4</text>
</g>
<g id="sheet2">
<path d="M796 137.8 H538.8 V472.8 H796" stroke="#929292" stroke-width="1.5" fill="none" />
<line x1="538.80" y1="454.60" x2="796.00" y2="454.60" stroke="#e0e0e0" stroke-width="1.5" />
<path d="M796 137.8 H596 V454.6" stroke="#e6e6e6" stroke-width="1.4" fill="none" />
<line x1="756.75" y1="463.00" x2="796.00" y2="463.00" stroke="#0a8a0a" stroke-width="1" />
<rect x="546.30" y="457.40" width="10.70" height="12.60" fill="#0a800a" />
<circle cx="551.40" cy="463.80" r="3.60" stroke="#001800" stroke-width="0.9" fill="none"/>
<circle cx="550.60" cy="463.00" r="1.30" stroke="#001800" stroke-width="0.9" fill="none"/>
<path d="M548 458.6 h7 M548 469 h7 M553 466 l2 2.4" stroke="#001800" stroke-width="0.8" fill="none" />
<text x="560.0" y="467.8" font-size="8.8" font-weight="700" fill="#0d900d" textLength="85" lengthAdjust="spacingAndGlyphs" transform="translate(0,0)">中国市政工程华北设计研究总院</text>
<line x1="648.00" y1="455.00" x2="648.00" y2="472.50" stroke="#0a8a0a" stroke-width="1.1" />
<line x1="660.00" y1="455.00" x2="660.00" y2="472.50" stroke="#0a8a0a" stroke-width="1.1" />
<line x1="678.50" y1="455.00" x2="678.50" y2="472.50" stroke="#0a8a0a" stroke-width="1.1" />
<line x1="690.50" y1="455.00" x2="690.50" y2="472.50" stroke="#0a8a0a" stroke-width="1.1" />
<line x1="709.25" y1="455.00" x2="709.25" y2="472.50" stroke="#0a8a0a" stroke-width="1.1" />
<line x1="720.50" y1="455.00" x2="720.50" y2="472.50" stroke="#0a8a0a" stroke-width="1.1" />
<line x1="738.50" y1="455.00" x2="738.50" y2="472.50" stroke="#0a8a0a" stroke-width="1.1" />
<line x1="756.75" y1="455.00" x2="756.75" y2="472.50" stroke="#0a8a0a" stroke-width="1.1" />
<line x1="841.75" y1="455.00" x2="841.75" y2="472.50" stroke="#0a8a0a" stroke-width="1.1" />
<line x1="853.75" y1="455.00" x2="853.75" y2="472.50" stroke="#0a8a0a" stroke-width="1.1" />
<line x1="878.00" y1="455.00" x2="878.00" y2="472.50" stroke="#0a8a0a" stroke-width="1.1" />
<line x1="890.00" y1="455.00" x2="890.00" y2="472.50" stroke="#0a8a0a" stroke-width="1.1" />
<line x1="968.75" y1="455.00" x2="968.75" y2="472.50" stroke="#0a8a0a" stroke-width="1.1" />
<line x1="980.50" y1="455.00" x2="980.50" y2="472.50" stroke="#0a8a0a" stroke-width="1.1" />
<line x1="648.00" y1="463.00" x2="756.75" y2="463.00" stroke="#0a8a0a" stroke-width="1.1" />
<line x1="841.75" y1="463.00" x2="878.00" y2="463.00" stroke="#0a8a0a" stroke-width="1.1" />
<line x1="968.75" y1="463.00" x2="1004.00" y2="463.00" stroke="#0a8a0a" stroke-width="1.1" />
<rect x="650.00" y="456.30" width="8.00" height="4.70" fill="#0c8c0c" />
<rect x="650.00" y="465.00" width="8.00" height="5.00" fill="#0c8c0c" />
<rect x="680.00" y="456.30" width="8.00" height="4.70" fill="#0c8c0c" />
<rect x="680.00" y="464.50" width="8.00" height="5.00" fill="#0c8c0c" />
<rect x="711.00" y="456.30" width="7.00" height="4.70" fill="#0c8c0c" />
<rect x="711.00" y="465.00" width="7.00" height="5.00" fill="#0c8c0c" />
<rect x="722.00" y="456.30" width="14.00" height="4.70" fill="#0c8c0c" />
<rect x="724.00" y="465.00" width="12.00" height="5.00" fill="#a000a0" />
<rect x="739.00" y="457.00" width="16.00" height="5.00" fill="#0c8c0c" />
<rect x="740.00" y="465.00" width="15.00" height="5.00" fill="#0c8c0c" />
<rect x="771.00" y="456.30" width="25.00" height="4.70" fill="#0c8c0c" />
<rect x="778.00" y="465.00" width="18.00" height="5.00" fill="#807c00" />
<text x="661.5" y="471" font-size="7.6" font-weight="700" fill="#0d900d" textLength="14" lengthAdjust="spacingAndGlyphs">审核</text>
<path d="M693 457 l4 1.5 l-2 2 l6 -2.5 l-3 3 l5 -1 M701.5 459 l0 5" stroke="#c06a30" stroke-width="1" fill="none" />
<path d="M694 456.5 l5 3 M698 456 l4 2" stroke="#cfcfcf" stroke-width="0.8" fill="none" />
<text x="695.6" y="200.8" font-size="5.4" font-weight="700" fill="#ffffff" textLength="9" lengthAdjust="spacingAndGlyphs">A-A</text>
<rect x="691.00" y="202.00" width="18.00" height="2.60" fill="#d0d0d0" />
<rect x="711.00" y="198.00" width="9.00" height="5.40" fill="#ffffff" />
<rect x="650.00" y="415.00" width="8.00" height="4.60" fill="#ffffff" />
<rect x="650.00" y="423.00" width="31.00" height="4.60" fill="#ffffff" />
<rect x="650.00" y="431.00" width="31.00" height="5.00" fill="#ffffff" />
<rect x="678.00" y="213.00" width="22.00" height="5.00" fill="#00ffff" />
<rect x="678.00" y="222.00" width="23.00" height="4.40" fill="#00ffff" />
<rect x="680.00" y="228.40" width="20.00" height="4.60" fill="#00ffff" />
<line x1="676.00" y1="220.40" x2="703.00" y2="220.40" stroke="#00e600" stroke-width="1.1" />
<line x1="676.00" y1="227.40" x2="702.60" y2="227.40" stroke="#00b000" stroke-width="1" />
<line x1="677.00" y1="234.60" x2="702.60" y2="234.60" stroke="#00b000" stroke-width="1.5" />
<line x1="702.60" y1="220.40" x2="702.60" y2="260.00" stroke="#00e600" stroke-width="1.2" />
<path d="M721 227.6 V234 L734.6 227.6 V234 L721 227.6 M722.5 237 L729 231 M733 237 L727 231" stroke="#00e600" stroke-width="1" fill="none" />
<rect x="679.40" y="252.00" width="48.20" height="2.40" fill="#a8a8a8" />
<rect x="679.40" y="254.20" width="48.20" height="1.50" fill="#f0f0f0" />
<clipPath id="h1"><rect x="679.4" y="255.7" width="48.2" height="8"/></clipPath>
<g clip-path="url(#h1)" stroke="#848484" stroke-width="0.9">
<line x1="672.0" y1="264.5" x2="679.0" y2="255" />
<line x1="675.2" y1="264.5" x2="682.2" y2="255" />
<line x1="678.4" y1="264.5" x2="685.4" y2="255" />
<line x1="681.6" y1="264.5" x2="688.6" y2="255" />
<line x1="684.8" y1="264.5" x2="691.8" y2="255" />
<line x1="688.0" y1="264.5" x2="695.0" y2="255" />
<line x1="691.2" y1="264.5" x2="698.2" y2="255" />
<line x1="694.4" y1="264.5" x2="701.4" y2="255" />
<line x1="697.6" y1="264.5" x2="704.6" y2="255" />
<line x1="700.8" y1="264.5" x2="707.8" y2="255" />
<line x1="704.0" y1="264.5" x2="711.0" y2="255" />
<line x1="707.2" y1="264.5" x2="714.2" y2="255" />
<line x1="710.4" y1="264.5" x2="717.4" y2="255" />
<line x1="713.6" y1="264.5" x2="720.6" y2="255" />
<line x1="716.8" y1="264.5" x2="723.8" y2="255" />
<line x1="720.0" y1="264.5" x2="727.0" y2="255" />
<line x1="723.2" y1="264.5" x2="730.2" y2="255" />
<line x1="726.4" y1="264.5" x2="733.4" y2="255" />
<line x1="729.6" y1="264.5" x2="736.6" y2="255" />
<line x1="732.8" y1="264.5" x2="739.8" y2="255" />
</g>
<path d="M665.5 263.8 V258 L663 254.2 L660 253.4 V245.6 H679.4 V263.8" stroke="#ffff00" stroke-width="1.4" fill="none" />
<path d="M727.6 264.3 H662.7 V299.4" stroke="#ffff00" stroke-width="1.5" fill="none" />
<line x1="662.70" y1="269.60" x2="727.60" y2="269.60" stroke="#ffff00" stroke-width="1.4" />
<line x1="662.70" y1="293.80" x2="727.60" y2="293.80" stroke="#ffff00" stroke-width="1.4" />
<line x1="662.70" y1="299.40" x2="727.60" y2="299.40" stroke="#ffff00" stroke-width="1.4" />
<path d="M664.6 299.4 V317.2 M679.4 299.4 V317.2" stroke="#ffff00" stroke-width="1.4" fill="none" />
<clipPath id="h2"><rect x="679.4" y="300.2" width="48.2" height="16.4"/></clipPath>
<g clip-path="url(#h2)" stroke="#7c7c7c" stroke-width="0.9">
<line x1="660.0" y1="318" x2="673.0" y2="299" />
<line x1="663.4" y1="318" x2="676.4" y2="299" />
<line x1="666.8" y1="318" x2="679.8" y2="299" />
<line x1="670.2" y1="318" x2="683.2" y2="299" />
<line x1="673.6" y1="318" x2="686.6" y2="299" />
<line x1="677.0" y1="318" x2="690.0" y2="299" />
<line x1="680.4" y1="318" x2="693.4" y2="299" />
<line x1="683.8" y1="318" x2="696.8" y2="299" />
<line x1="687.2" y1="318" x2="700.2" y2="299" />
<line x1="690.6" y1="318" x2="703.6" y2="299" />
<line x1="694.0" y1="318" x2="707.0" y2="299" />
<line x1="697.4" y1="318" x2="710.4" y2="299" />
<line x1="700.8" y1="318" x2="713.8" y2="299" />
<line x1="704.2" y1="318" x2="717.2" y2="299" />
<line x1="707.6" y1="318" x2="720.6" y2="299" />
<line x1="711.0" y1="318" x2="724.0" y2="299" />
<line x1="714.4" y1="318" x2="727.4" y2="299" />
<line x1="717.8" y1="318" x2="730.8" y2="299" />
<line x1="721.2" y1="318" x2="734.2" y2="299" />
<line x1="724.6" y1="318" x2="737.6" y2="299" />
<line x1="728.0" y1="318" x2="741.0" y2="299" />
<line x1="731.4" y1="318" x2="744.4" y2="299" />
<line x1="734.8" y1="318" x2="747.8" y2="299" />
</g>
<line x1="679.40" y1="299.80" x2="727.60" y2="299.80" stroke="#ffff00" stroke-width="1.2" stroke-dasharray="3 1.6"/>
<line x1="679.40" y1="317.00" x2="727.60" y2="317.00" stroke="#ffff00" stroke-width="1.2" stroke-dasharray="3 1.6"/>
<rect x="694.00" y="306.00" width="21.00" height="5.00" fill="#00ffff" />
<rect x="668.00" y="306.00" width="8.00" height="5.00" fill="#00ff00" />
<path d="M727.6 317.2 H655 V354.6" stroke="#ffff00" stroke-width="1.5" fill="none" />
<path d="M727.6 354.6 H631 V388.6 H727.6" stroke="#ffff00" stroke-width="1.5" fill="none" />
<rect x="675.00" y="368.00" width="8.00" height="5.00" fill="#00ff00" />
<path d="M644 337.6 H687.4 L689 335 L691 342 L692.4 337.6 H727.6" stroke="#e000e0" stroke-width="1.1" fill="none" />
<path d="M644 339.6 H688 M692 339.6 H727.6" stroke="#e000e0" stroke-width="1.1" fill="none" />
<line x1="661.20" y1="304.40" x2="729.10" y2="304.40" stroke="#00e600" stroke-width="1.3" />
<line x1="662.70" y1="302.00" x2="662.70" y2="306.80" stroke="#00e600" stroke-width="1.2" />
<line x1="661.20" y1="305.90" x2="664.20" y2="302.90" stroke="#00e600" stroke-width="0.8" />
<line x1="727.60" y1="302.00" x2="727.60" y2="306.80" stroke="#00e600" stroke-width="1.2" />
<line x1="726.10" y1="305.90" x2="729.10" y2="302.90" stroke="#00e600" stroke-width="0.8" />
<rect x="692.00" y="299.40" width="6.00" height="3.60" fill="#00ff00" />
<line x1="663.10" y1="322.60" x2="729.10" y2="322.60" stroke="#00e600" stroke-width="1.3" />
<line x1="664.60" y1="320.20" x2="664.60" y2="325.00" stroke="#00e600" stroke-width="1.2" />
<line x1="663.10" y1="324.10" x2="666.10" y2="321.10" stroke="#00e600" stroke-width="0.8" />
<line x1="727.60" y1="320.20" x2="727.60" y2="325.00" stroke="#00e600" stroke-width="1.2" />
<line x1="726.10" y1="324.10" x2="729.10" y2="321.10" stroke="#00e600" stroke-width="0.8" />
<rect x="694.00" y="317.40" width="5.00" height="3.80" fill="#00ff00" />
<rect x="690.00" y="325.00" width="8.00" height="5.00" fill="#00ff00" />
<line x1="653.50" y1="348.40" x2="729.10" y2="348.40" stroke="#00e600" stroke-width="1.3" />
<line x1="655.00" y1="346.00" x2="655.00" y2="350.80" stroke="#00e600" stroke-width="1.2" />
<line x1="653.50" y1="349.90" x2="656.50" y2="346.90" stroke="#00e600" stroke-width="0.8" />
<line x1="727.60" y1="346.00" x2="727.60" y2="350.80" stroke="#00e600" stroke-width="1.2" />
<line x1="726.10" y1="349.90" x2="729.10" y2="346.90" stroke="#00e600" stroke-width="0.8" />
<rect x="689.00" y="343.00" width="5.00" height="4.00" fill="#00ff00" />
<line x1="629.50" y1="394.60" x2="729.10" y2="394.60" stroke="#00e600" stroke-width="1.3" />
<line x1="631.00" y1="392.00" x2="631.00" y2="397.20" stroke="#00e600" stroke-width="1.2" />
<line x1="629.50" y1="396.10" x2="632.50" y2="393.10" stroke="#00e600" stroke-width="0.8" />
<line x1="727.60" y1="392.00" x2="727.60" y2="397.20" stroke="#00e600" stroke-width="1.2" />
<line x1="726.10" y1="396.10" x2="729.10" y2="393.10" stroke="#00e600" stroke-width="0.8" />
<rect x="677.00" y="389.00" width="5.00" height="5.40" fill="#00ff00" />
<line x1="618.40" y1="243.90" x2="618.40" y2="390.50" stroke="#00e600" stroke-width="1.2" />
<line x1="616.00" y1="245.40" x2="620.80" y2="245.40" stroke="#00e600" stroke-width="1.2" />
<line x1="616.90" y1="246.90" x2="619.90" y2="243.90" stroke="#00e600" stroke-width="0.8" />
<line x1="616.00" y1="317.40" x2="620.80" y2="317.40" stroke="#00e600" stroke-width="1.2" />
<line x1="616.90" y1="318.90" x2="619.90" y2="315.90" stroke="#00e600" stroke-width="0.8" />
<line x1="616.00" y1="355.00" x2="620.80" y2="355.00" stroke="#00e600" stroke-width="1.2" />
<line x1="616.90" y1="356.50" x2="619.90" y2="353.50" stroke="#00e600" stroke-width="0.8" />
<line x1="616.00" y1="389.00" x2="620.80" y2="389.00" stroke="#00e600" stroke-width="1.2" />
<line x1="616.90" y1="390.50" x2="619.90" y2="387.50" stroke="#00e600" stroke-width="0.8" />
<rect x="614.00" y="276.00" width="5.00" height="9.00" fill="#00ff00" />
<rect x="614.00" y="332.00" width="5.00" height="6.00" fill="#00ff00" />
<rect x="614.00" y="368.00" width="4.40" height="4.40" fill="#00ff00" />
<line x1="718.00" y1="264.30" x2="718.00" y2="300.00" stroke="#00c000" stroke-width="1.2" />
<rect x="714.00" y="265.00" width="4.60" height="3.20" fill="#00ff00" />
<rect x="714.00" y="279.00" width="4.60" height="4.00" fill="#00ff00" />
<rect x="714.00" y="293.00" width="4.60" height="4.00" fill="#00ff00" />
<path d="M716 299 l2 2 l2 -2" stroke="#00e600" stroke-width="0.9" fill="none" />
<path d="M682.4 267.4 L688 277.6 H708" stroke="#00c000" stroke-width="1.1" fill="none" />
<rect x="691.00" y="271.00" width="16.00" height="4.20" fill="#00ff00" />
<line x1="658.50" y1="240.60" x2="680.90" y2="240.60" stroke="#00e600" stroke-width="1.3" />
<line x1="660.00" y1="238.40" x2="660.00" y2="242.80" stroke="#00e600" stroke-width="1.2" />
<line x1="658.50" y1="242.10" x2="661.50" y2="239.10" stroke="#00e600" stroke-width="0.8" />
<line x1="679.40" y1="238.40" x2="679.40" y2="242.80" stroke="#00e600" stroke-width="1.2" />
<line x1="677.90" y1="242.10" x2="680.90" y2="239.10" stroke="#00e600" stroke-width="0.8" />
<line x1="664.00" y1="238.60" x2="664.00" y2="243.00" stroke="#00e600" stroke-width="1" />
<rect x="661.00" y="235.60" width="4.40" height="3.60" fill="#00ff00" />
<rect x="670.00" y="235.00" width="4.00" height="4.00" fill="#00ff00" />
<line x1="653.50" y1="244.10" x2="653.50" y2="262.10" stroke="#00e600" stroke-width="1.2" />
<line x1="651.50" y1="245.60" x2="655.50" y2="245.60" stroke="#00e600" stroke-width="1.2" />
<line x1="652.00" y1="247.10" x2="655.00" y2="244.10" stroke="#00e600" stroke-width="0.8" />
<line x1="651.50" y1="253.40" x2="655.50" y2="253.40" stroke="#00e600" stroke-width="1.2" />
<line x1="652.00" y1="254.90" x2="655.00" y2="251.90" stroke="#00e600" stroke-width="0.8" />
<line x1="651.50" y1="260.60" x2="655.50" y2="260.60" stroke="#00e600" stroke-width="1.2" />
<line x1="652.00" y1="262.10" x2="655.00" y2="259.10" stroke="#00e600" stroke-width="0.8" />
<rect x="649.00" y="247.00" width="4.00" height="3.40" fill="#00ff00" />
<rect x="649.00" y="252.20" width="4.00" height="4.00" fill="#00ff00" />
<line x1="687.00" y1="244.10" x2="687.00" y2="254.50" stroke="#00e600" stroke-width="1.2" />
<line x1="685.00" y1="245.60" x2="689.00" y2="245.60" stroke="#00e600" stroke-width="1.2" />
<line x1="685.50" y1="247.10" x2="688.50" y2="244.10" stroke="#00e600" stroke-width="0.8" />
<line x1="685.00" y1="253.00" x2="689.00" y2="253.00" stroke="#00e600" stroke-width="1.2" />
<line x1="685.50" y1="254.50" x2="688.50" y2="251.50" stroke="#00e600" stroke-width="0.8" />
<rect x="682.00" y="247.00" width="4.00" height="3.60" fill="#00ff00" />
<line x1="727.60" y1="224.00" x2="727.60" y2="396.00" stroke="#d80000" stroke-width="1.3" stroke-dasharray="11 2.2 2 2.2"/>
</g>
<!-- scrollbar -->
<rect x="5" y="533.8" width="791" height="22" fill="#ffffff"/>
<rect x="5" y="534.9" width="791" height="19" fill="#f0f0f0"/>
<rect x="189" y="535.2" width="21" height="18.4" fill="#c9c9c9"/>
<rect x="5" y="555" width="791" height="3.7" fill="#5c5c5c"/>
<text class="wm" transform="translate(656,589.2) scale(0.5,1)" font-size="30" fill="#8c8c8c" text-anchor="middle" x="9.9 29.8 49.6 69.4 89.3 109.1 129.0 148.8 168.6 188.5 208.3 228.2 248.0" y="0">www.cndao.com</text>
</svg>
</body></html>
